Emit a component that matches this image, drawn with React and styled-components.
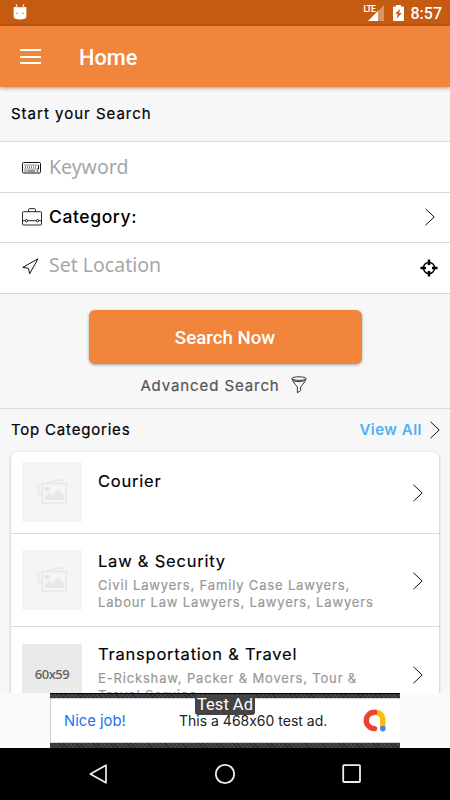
import React from "react";
import styled, { createGlobalStyle } from "styled-components";

const categories = [
  { title: "Courier", height: 81, top: 10, shift: 8, chevron: 41 },
  {
    title: "Law & Security",
    lines: ["Civil Lawyers, Family Case Lawyers,", "Labour Law Lawyers, Lawyers, Lawyers"],
    height: 92,
    top: 16,
    shift: 0,
    chevron: 47,
  },
  {
    title: "Transportation & Travel",
    lines: ["E-Rickshaw, Packer & Movers, Tour &", "Travel Service"],
    height: 92,
    top: 17,
    shift: -1,
    chevron: 48,
    size: "60x59",
  },
];

export default function App() {
  return (
    <Phone>
      <GlobalStyle />
      <StatusBar>
        <DebugIcon />
        <StatusRight>
          <SignalIcon />
          <BatteryIcon />
          <Clock>8:57</Clock>
        </StatusRight>
      </StatusBar>
      <AppBar>
        <MenuButton aria-label="Menu">
          <span />
          <span />
          <span />
        </MenuButton>
        <Title>Home</Title>
      </AppBar>
      <Content>
        <SectionTitle>Start your Search</SectionTitle>
        <Fields>
          <Field>
            <KeyboardIcon />
            <Placeholder>Keyword</Placeholder>
          </Field>
          <Field>
            <BriefcaseIcon />
            <FieldLabel>Category:</FieldLabel>
            <Chevron $right={15} />
          </Field>
          <Field>
            <ArrowIcon />
            <Placeholder $up>Set Location</Placeholder>
            <TargetIcon />
          </Field>
        </Fields>
        <Actions>
          <SearchButton>Search Now</SearchButton>
          <Advanced>
            Advanced Search
            <FunnelIcon />
          </Advanced>
        </Actions>
        <TopRow>
          <TopTitle>Top Categories</TopTitle>
          <ViewAll>View All</ViewAll>
          <Chevron $right={10} />
        </TopRow>
        <Card>
          {categories.map((c) => (
            <Category key={c.title} $height={c.height} $top={c.top}>
              {c.size ? (
                <SizeThumb>{c.size}</SizeThumb>
              ) : (
                <Thumb>
                  <PhotosIcon />
                </Thumb>
              )}
              <Info $shift={c.shift}>
                <Name>{c.title}</Name>
                {c.lines && c.lines.map((l) => <Sub key={l}>{l}</Sub>)}
              </Info>
              <ChevronSlot $gap={c.chevron - c.top - 9}>
                <Chevron $right={16} />
              </ChevronSlot>
            </Category>
          ))}
        </Card>
      </Content>
      <AdArea>
        <Ad>
          <AdBody>
            <NiceJob>Nice job!</NiceJob>
            <AdText>This a 468x60 test ad.</AdText>
            <AdmobIcon />
          </AdBody>
          <AdBadge>Test Ad</AdBadge>
        </Ad>
      </AdArea>
      <NavBar>
        <svg width="20" height="22" viewBox="0 0 20 22">
          <path d="M18 2.200v17.600L2.300 11z" fill="none" stroke="#eee" strokeWidth="1.700" strokeLinejoin="round" />
        </svg>
        <svg width="22" height="22" viewBox="0 0 22 22">
          <circle cx="11" cy="11" r="9.200" fill="none" stroke="#eee" strokeWidth="1.800" />
        </svg>
        <svg width="20" height="22" viewBox="0 0 20 22">
          <rect x="1.200" y="2.200" width="16.800" height="16.800" rx=".8" fill="none" stroke="#eee" strokeWidth="1.800" />
        </svg>
      </NavBar>
    </Phone>
  );
}

function DebugIcon() {
  return (
    <svg width="14" height="17" viewBox="0 0 14 17">
      <path d="M3.200 1.200l1 3M10.800 1.200l-1 3" stroke="#fff" strokeWidth="1" />
      <path d="M.6 4.600Q2 3 3.200 4.200h7.600Q12 3 13.400 4.600v8.600Q13.200 16.400 7 16.400T.6 13.200z" fill="#fff" />
      <circle cx="4" cy="10.200" r=".7" fill="#c55a11" />
      <circle cx="10" cy="10.200" r=".7" fill="#c55a11" />
    </svg>
  );
}

function SignalIcon() {
  return (
    <Signal>
      <small>LTE</small>
      <svg width="16" height="16" viewBox="0 0 16 16">
        <path d="M16 0v16H0z" fill="#fff" opacity=".35" />
        <path d="M10 6v10H0z" fill="#fff" />
      </svg>
    </Signal>
  );
}

function BatteryIcon() {
  return (
    <svg width="11" height="16" viewBox="0 0 11 16">
      <path d="M3 0h5v1.500h2q1 0 1 1V15q0 1-1 1H1q-1 0-1-1V2.500q0-1 1-1h2z" fill="#fff" />
      <path d="M7 4L2.200 8.700h2.500L3.800 13.400 8.800 8H6.200z" fill="#c55a11" />
    </svg>
  );
}

function KeyboardIcon() {
  return (
    <FieldIcon width="20" height="14" viewBox="0 -2 20 14">
      <rect x=".5" y=".5" width="18" height="10.500" rx="1.200" fill="none" stroke="#111" strokeWidth="1" />
      <path d="M2.500 3h14M3 5h12M2.500 7h12" stroke="#111" strokeWidth="1" strokeDasharray="1 1" />
      <path d="M16.500 3v4h-2M2.500 9h2M5.500 9h7.500M14.500 9h2" fill="none" stroke="#111" strokeWidth=".9" />
    </FieldIcon>
  );
}

function BriefcaseIcon() {
  return (
    <FieldIcon width="20" height="18" viewBox="0 0 20 18">
      <g fill="none" stroke="#111" strokeWidth=".9">
        <rect x=".5" y="3.700" width="19" height="13.300" rx=".7" />
        <path d="M6.500 3.500V1.800q0-1.200 1-1.200h5q1 0 1 1.200v1.700M.5 12.700h2.800M5.700 12.700h8.600M16.700 12.700h2.800" />
        <circle cx="4.500" cy="12.700" r="1.200" />
        <circle cx="15.500" cy="12.700" r="1.200" />
      </g>
    </FieldIcon>
  );
}

function ArrowIcon() {
  return (
    <FieldIcon width="17" height="20" viewBox="0 0 17 20">
      <path d="M16 .8L.8 9.400l5.700.9 1.100 5.500z" fill="none" stroke="#111" strokeWidth="1" strokeLinejoin="round" />
    </FieldIcon>
  );
}

function TargetIcon() {
  return (
    <Target width="18" height="18" viewBox="0 0 18 18">
      <circle cx="9" cy="9" r="5.600" fill="none" stroke="#000" strokeWidth="1.500" />
      <path d="M9 .5v5.500M9 12v5.500M.5 9H6M12 9h5.500" stroke="#000" strokeWidth="2.500" />
    </Target>
  );
}

function FunnelIcon() {
  return (
    <svg width="16" height="18" viewBox="0 0 16 18">
      <g fill="none" stroke="#222" strokeWidth=".9">
        <ellipse cx="8" cy="2.600" rx="7" ry="1.800" />
        <path d="M1 2.800q.3 2.400 5.400 8.200v5.800l3.200-2.200V11Q14.700 5.200 15 2.800M2.200 4.800q5.800 2 11.600 0" />
      </g>
    </svg>
  );
}

function PhotosIcon() {
  return (
    <svg width="32" height="27" viewBox="0 0 32 27">
      <path d="M4.500 18L1.300 6.700 24.500 1.500l.8 3" fill="none" stroke="#e8e8e8" strokeWidth="1.500" />
      <path d="M6.200 5.500h24V25h-24z" fill="#f5f5f5" stroke="#e8e8e8" strokeWidth="1.600" />
      <circle cx="11.500" cy="11" r="2.600" fill="#e6e6e6" />
      <path d="M8.500 22v-2.500l4.500-4.500 3.500 2.500 5.500-6.500 6 6.500V22z" fill="#e6e6e6" />
    </svg>
  );
}

function AdmobIcon() {
  return (
    <svg width="23" height="23" viewBox="0 0 23 23">
      <path d="M12.500 3.200a7.400 7.400 0 0 1 7.300 7.800v8" fill="none" stroke="#fbbc04" strokeWidth="5.400" />
      <path d="M11.500 3.200a8.200 8.200 0 1 0 0 16.400" fill="none" stroke="#ea4335" strokeWidth="5.400" strokeLinecap="round" />
      <circle cx="19.800" cy="19.600" r="2.800" fill="#4285f4" />
    </svg>
  );
}

function Chevron({ $right }) {
  return (
    <ChevronSvg width="10" height="18" viewBox="0 0 10 18" $right={$right}>
      <path d="M.5.800L9.200 9 .5 17.200" fill="none" stroke="#111" strokeWidth="1" />
    </ChevronSvg>
  );
}

const GlobalStyle = createGlobalStyle`
  * {
    box-sizing: border-box;
  }
  body {
    margin: 0;
    overflow: hidden;
  }
  svg {
    display: block;
    flex-shrink: 0;
  }
`;

const Phone = styled.div`
  width: 450px;
  height: 800px;
  display: flex;
  flex-direction: column;
  overflow: hidden;
  background: #f7f7f7;
  color: #000;
  font-family: Inter, "Liberation Sans", sans-serif;
  white-space: nowrap;
`;

const StatusBar = styled.div`
  height: 26px;
  flex-shrink: 0;
  display: flex;
  justify-content: space-between;
  padding: 3px 8px 0 13px;
  background: #c55a11;
`;

const StatusRight = styled.div`
  display: flex;
  padding-top: 2px;
`;

const Signal = styled.div`
  display: flex;
  margin-right: 9px;
  small {
    font: 700 8.5px/9px Roboto, sans-serif;
    letter-spacing: -0.7px;
    color: #fff;
    width: 10px;
    margin-right: -6px;
  }
`;

const Clock = styled.div`
  font: 500 16px/18px Roboto, sans-serif;
  color: #fff;
  margin-left: 7px;
`;

const AppBar = styled.header`
  height: 61px;
  flex-shrink: 0;
  display: flex;
  padding-left: 20px;
  background: #f0853b;
  box-shadow: 0 1px 4px rgba(0, 0, 0, 0.4);
  z-index: 1;
`;

const MenuButton = styled.button`
  width: 21px;
  height: 15px;
  margin: 23px 38px 0 0;
  padding: 0;
  border: 0;
  background: none;
  display: flex;
  flex-direction: column;
  justify-content: space-between;
  span {
    height: 2px;
    width: 21px;
    background: #fff;
  }
`;

const Title = styled.h1`
  margin: 0;
  font: 500 21.8px/63px Roboto, sans-serif;
  color: #fff;
`;

const Content = styled.main`
  height: 606px;
  flex-shrink: 0;
  overflow: hidden;
`;

const SectionTitle = styled.h2`
  margin: 0;
  height: 54px;
  padding-left: 11px;
  font-size: 15px;
  font-weight: 400;
  line-height: 53px;
  letter-spacing: 1px;
  -webkit-text-stroke: 0.2px;
`;

const Fields = styled.div`
  border-top: 1px solid #dcdcdc;
  background: #fff;
`;

const Field = styled.div`
  height: 50.5px;
  display: flex;
  align-items: center;
  border-bottom: 1px solid #d8d8d8;
`;

const FieldIcon = styled.svg`
  margin: 0 ${({ width }) => 27 - width}px 0 22px;
`;

const Placeholder = styled.div`
  font: 400 19.5px/26px "Noto Sans", sans-serif;
  color: #a6a6a6;
  margin-top: ${({ $up }) => ($up ? "-5px" : "1px")};
`;

const FieldLabel = styled.div`
  font-size: 17.5px;
  font-weight: 500;
  letter-spacing: 0.6px;
  margin-top: -2px;
`;

const Target = styled.svg`
  margin: 0 12px 0 auto;
`;

const ChevronSvg = styled.svg`
  margin-left: auto;
  margin-right: ${({ $right }) => $right}px;
`;

const Actions = styled.div`
  height: 115px;
  display: flex;
  flex-direction: column;
  align-items: center;
  padding-top: 16px;
  border-bottom: 1px solid #dadada;
`;

const SearchButton = styled.button`
  width: 273px;
  height: 54px;
  flex-shrink: 0;
  padding: 2px 0 0;
  border: 0;
  border-radius: 6px;
  background: #f0853b;
  color: #fff;
  font: 500 18.7px Roboto, sans-serif;
  box-shadow: 0 1px 3px rgba(0, 0, 0, 0.35);
`;

const Advanced = styled.div`
  display: flex;
  align-items: center;
  gap: 11px;
  margin-top: 12px;
  padding-right: 3px;
  font-size: 15px;
  font-weight: 400;
  letter-spacing: 0.9px;
  color: #555;
  -webkit-text-stroke: 0.2px;
`;

const TopRow = styled.div`
  height: 43px;
  display: flex;
  align-items: center;
  padding-left: 11px;
`;

const TopTitle = styled.h2`
  margin: -2px 0 0;
  font-size: 15px;
  font-weight: 400;
  letter-spacing: 0.8px;
  -webkit-text-stroke: 0.2px;
`;

const ViewAll = styled.a`
  margin: -2px 8px 0 auto;
  font-size: 15px;
  font-weight: 600;
  letter-spacing: 0.5px;
  color: #50b0f2;
  & + svg {
    margin-left: 0;
  }
`;

const Card = styled.div`
  margin: 0 11px;
  background: #fff;
  border-radius: 6px;
  box-shadow: 0 1px 3px rgba(0, 0, 0, 0.3);
`;

const Category = styled.div`
  height: ${({ $height }) => $height + 1}px;
  display: flex;
  padding: ${({ $top }) => $top}px 0 0 11px;
  border-bottom: 1px solid #dcdcdc;
`;

const Thumb = styled.div`
  width: 60px;
  height: 60px;
  flex-shrink: 0;
  display: flex;
  align-items: center;
  justify-content: center;
  background: #f5f5f5;
`;

const SizeThumb = styled(Thumb)`
  background: #eaeaea;
  color: #666;
  font: 600 13px "Open Sans", sans-serif;
  letter-spacing: -0.5px;
`;

const Info = styled.div`
  margin: ${({ $shift }) => $shift}px 0 0 16px;
`;

const Name = styled.div`
  font-size: 16.5px;
  line-height: 22px;
  margin-bottom: 5px;
  letter-spacing: 0.78px;
  -webkit-text-stroke: 0.15px;
`;

const Sub = styled.div`
  font-size: 13px;
  line-height: 17px;
  letter-spacing: 0.84px;
  color: #989898;
  -webkit-text-stroke: 0.2px;
`;

const ChevronSlot = styled.div`
  margin-left: auto;
  padding-top: ${({ $gap }) => $gap}px;
`;

const AdArea = styled.div`
  height: 55px;
  flex-shrink: 0;
  background: #fafafa;
  padding: 0 50px;
`;

const Ad = styled.div`
  position: relative;
  height: 55px;
  padding: 4px 0 5px;
  background: repeating-linear-gradient(45deg, #2b2b2b 0 1px, #444 1px 3px);
  border-top: 1px solid #000;
`;

const AdBody = styled.div`
  height: 45px;
  display: flex;
  align-items: center;
  padding: 0 14px 0 13px;
  background: #fff;
  border: 1px solid #c9d3dd;
  border-right: 0;
`;

const NiceJob = styled.div`
  width: 115px;
  font-size: 14.8px;
  color: #1a73f0;
`;

const AdText = styled.div`
  flex: 1;
  font-size: 14px;
  font-feature-settings: "calt" 0;
  color: #202124;
`;

const AdBadge = styled.div`
  position: absolute;
  top: 1px;
  left: 145px;
  width: 60px;
  height: 20px;
  border-radius: 3px;
  background: #444;
  color: #fff;
  font: 400 16.5px/20px Roboto, sans-serif;
  text-align: center;
`;

const NavBar = styled.nav`
  height: 52px;
  flex-shrink: 0;
  display: flex;
  align-items: center;
  justify-content: space-between;
  padding: 0 88px;
  background: #000;
`;
